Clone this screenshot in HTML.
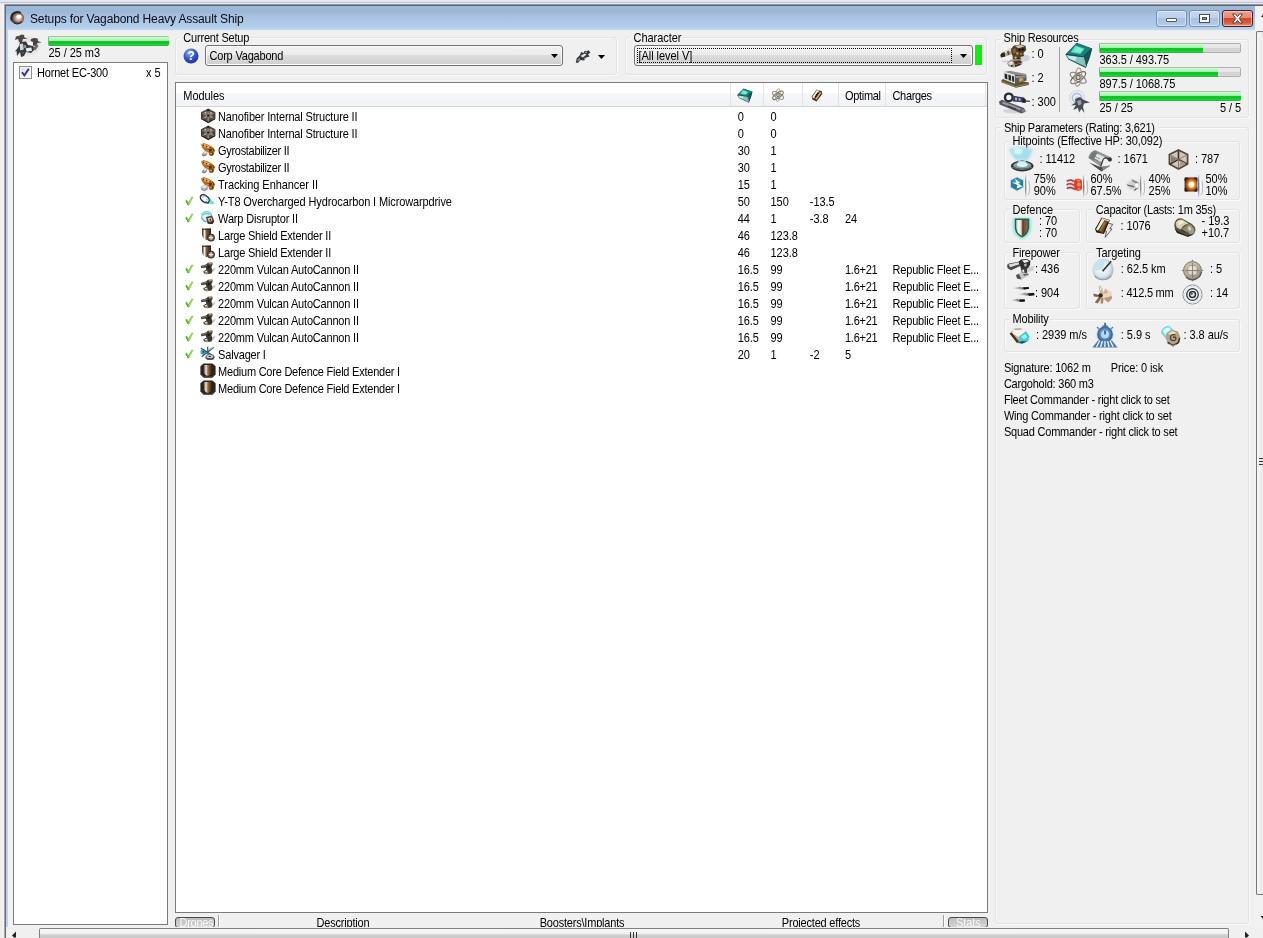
<!DOCTYPE html>
<html><head><meta charset="utf-8"><title>Setups for Vagabond Heavy Assault Ship</title>
<style>
html,body{margin:0;padding:0}
body{width:1263px;height:938px;overflow:hidden;background:#f0f0f0;font-family:"Liberation Sans",sans-serif;font-size:11px;color:#000;position:relative}
.a{position:absolute;box-sizing:content-box}
.t{position:absolute;white-space:nowrap;line-height:13px;font-size:11px;transform:scaleY(1.125);transform-origin:0 10px}
.gb{border:1px solid #e3e3e3;border-radius:3px;box-shadow:inset 1px 1px 0 #f9f9f9,1px 1px 0 #f9f9f9}
.pb{border-radius:2px;background:linear-gradient(#ececec 0%,#e6e6e6 45%,#d2d2d2 55%,#d8d8d8 85%,#e6e6e6 100%);box-shadow:inset 0 0 0 1px #b0b0b0;overflow:hidden}
.pf{height:100%;border-left:1px solid #62c672;background:linear-gradient(#a6c0a6 0,#a6c0a6 10%,#d0fad6 10%,#c2f6ca 25%,#9ceea8 49%,#12c62a 51%,#0cc424 65%,#1cd434 89%,#36b446 90%,#36b446 100%)}
.lb{border:1px solid #7b7b7b;background:#fff}
.cb{border:1px solid #707070;border-radius:3px;background:linear-gradient(#f2f2f2 0%,#ebebeb 49%,#dddddd 50%,#cfcfcf 100%);box-shadow:inset 0 0 0 1px #fcfcfc}
.arr{position:absolute;width:0;height:0;border-left:4px solid transparent;border-right:4px solid transparent;border-top:4px solid #000}
.hs{position:absolute;top:83px;width:1px;height:23px;background:#e2e3ea}
svg{position:absolute;overflow:visible}
</style></head><body>

<svg width="0" height="0" style="left:0;top:0"><defs>
<filter id="b45" x="-20%" y="-20%" width="140%" height="140%"><feGaussianBlur stdDeviation="0.45"/></filter>
<filter id="b30" x="-20%" y="-20%" width="140%" height="140%"><feGaussianBlur stdDeviation="0.3"/></filter>
<filter id="b70" x="-20%" y="-20%" width="140%" height="140%"><feGaussianBlur stdDeviation="0.7"/></filter>
<filter id="b120" x="-30%" y="-30%" width="160%" height="160%"><feGaussianBlur stdDeviation="1.2"/></filter>
<radialGradient id="gNano" cx="50%" cy="45%" r="60%"><stop offset="0" stop-color="#8a8078"/><stop offset="0.6" stop-color="#524840"/><stop offset="1" stop-color="#2c2620"/></radialGradient>
<linearGradient id="gRig" x1="0" x2="1" y1="0" y2="0"><stop offset="0" stop-color="#3a2a1c"/><stop offset="0.3" stop-color="#f4eee4"/><stop offset="0.5" stop-color="#a0703c"/><stop offset="0.8" stop-color="#5a3a1c"/><stop offset="1" stop-color="#2a1c10"/></linearGradient>
<linearGradient id="gLse" x1="0" x2="1" y1="0" y2="0"><stop offset="0" stop-color="#30241a"/><stop offset="0.28" stop-color="#f0ece4"/><stop offset="0.5" stop-color="#7a5a3a"/><stop offset="1" stop-color="#2a2018"/></linearGradient>
<linearGradient id="gCpu" x1="0" x2="1" y1="0" y2="1"><stop offset="0" stop-color="#5fe0cc"/><stop offset="0.5" stop-color="#2aa39a"/><stop offset="1" stop-color="#125e60"/></linearGradient>
<radialGradient id="gShGlow" cx="50%" cy="35%" r="60%"><stop offset="0" stop-color="#d8f8ff"/><stop offset="0.5" stop-color="#9edcf0"/><stop offset="1" stop-color="#9edcf0" stop-opacity="0"/></radialGradient>
<radialGradient id="gDisc" cx="50%" cy="50%" r="50%"><stop offset="0" stop-color="#e8ffff"/><stop offset="0.35" stop-color="#9ad0e0"/><stop offset="0.6" stop-color="#4a4c50"/><stop offset="1" stop-color="#2a2a2c"/></radialGradient>
<linearGradient id="gArm" x1="0" x2="1" y1="0" y2="1"><stop offset="0" stop-color="#c8c8c8"/><stop offset="0.5" stop-color="#8c8c8c"/><stop offset="1" stop-color="#4a4a4a"/></linearGradient>
<radialGradient id="gExp" cx="55%" cy="50%" r="55%"><stop offset="0" stop-color="#ffffee"/><stop offset="0.3" stop-color="#ffd060"/><stop offset="0.6" stop-color="#e07018"/><stop offset="1" stop-color="#4a2010"/></radialGradient>
<linearGradient id="gDef" x1="0" x2="1" y1="0" y2="0"><stop offset="0" stop-color="#b8ccc4"/><stop offset="0.2" stop-color="#f6f6f2"/><stop offset="0.42" stop-color="#ead8d0"/><stop offset="0.56" stop-color="#6a3418"/><stop offset="0.76" stop-color="#7a5c44"/><stop offset="1" stop-color="#5a7266"/></linearGradient>
<linearGradient id="gCap" x1="0" x2="1" y1="0" y2="1"><stop offset="0" stop-color="#f0e8d8"/><stop offset="0.5" stop-color="#a88858"/><stop offset="1" stop-color="#4a3420"/></linearGradient>
<linearGradient id="gBat" x1="0" x2="1" y1="0" y2="1"><stop offset="0" stop-color="#8a846a"/><stop offset="0.5" stop-color="#4a4630"/><stop offset="1" stop-color="#2a281c"/></linearGradient>
<linearGradient id="gSil" x1="0" x2="0" y1="0" y2="1"><stop offset="0" stop-color="#e0e0e0"/><stop offset="0.5" stop-color="#909090"/><stop offset="1" stop-color="#3a3a3a"/></linearGradient>
<radialGradient id="gRng" cx="45%" cy="45%" r="55%"><stop offset="0" stop-color="#ffffff"/><stop offset="0.7" stop-color="#d8e6ee"/><stop offset="1" stop-color="#a8b8c4"/></radialGradient>
<radialGradient id="gCmp" cx="45%" cy="40%" r="60%"><stop offset="0" stop-color="#ece6da"/><stop offset="0.6" stop-color="#bdb5a5"/><stop offset="1" stop-color="#8c8474"/></radialGradient>
<radialGradient id="gStop" cx="50%" cy="45%" r="55%"><stop offset="0" stop-color="#bcdcf8"/><stop offset="0.6" stop-color="#5a90c4"/><stop offset="1" stop-color="#35618f"/></radialGradient>
<linearGradient id="gTur" x1="0" x2="1" y1="0" y2="1"><stop offset="0" stop-color="#a88860"/><stop offset="0.5" stop-color="#6a5038"/><stop offset="1" stop-color="#3a2c20"/></linearGradient>
</defs></svg>
<div class="a" style="left:0px;top:0px;width:1263px;height:2px;background:#e4e6f6"></div>
<div class="a" style="left:0px;top:2px;width:1263px;height:1px;background:#c0c4c8"></div>
<div class="a" style="left:0px;top:3px;width:1263px;height:1px;background:#e8ecee"></div>
<div class="a" style="left:0px;top:4px;width:5px;height:934px;background:linear-gradient(90deg,#f4ecec 0,#f4ecec 40%,#f1f2f2 41%)"></div>
<div class="a" style="left:4px;top:4px;width:1259px;height:1px;background:#8e989a"></div>
<div class="a" style="left:4px;top:4px;width:1px;height:934px;background:#a4a8ac"></div>
<div class="a" style="left:5px;top:5px;width:1258px;height:1px;background:#5a6874"></div>
<div class="a" style="left:5px;top:5px;width:1px;height:933px;background:#5e6e78"></div>
<div class="a" style="left:6px;top:6px;width:1249px;height:24px;background:linear-gradient(#a2b6da 0%,#98b8d6 20%,#9cbcd4 32%,#a8bee0 36%,#b0d0ec 90%,#c0d2e4 93%,#c4d6e8 100%)"></div>
<div class="a" style="left:6px;top:30px;width:1249px;height:1px;background:#e4eef8"></div>
<div class="a" style="left:6px;top:30px;width:2px;height:897px;background:#c4cff0"></div>
<div class="a" style="left:8px;top:31px;width:2px;height:896px;background:#ecf3ea"></div>
<div class="a" style="left:10px;top:31px;width:3px;height:896px;background:#f2f1f9"></div>
<div class="a" style="left:1255px;top:6px;width:8px;height:932px;background:#f2f2f2"></div>
<div class="a" style="left:1256px;top:31px;width:7px;height:862px;background:linear-gradient(90deg,#f6f6f6,#e6e6e6);border-left:1px solid #777;border-top:1px solid #777;border-bottom:1px solid #777;border-radius:2px 0 0 2px"></div>
<div class="a" style="left:1259px;top:458px;width:4px;height:1px;background:#333"></div>
<div class="a" style="left:1259px;top:461px;width:4px;height:1px;background:#333"></div>
<div class="a" style="left:1259px;top:464px;width:4px;height:1px;background:#333"></div>
<svg style="left:1257px;top:12px" width="6" height="8"><path d="M4 5 L6 2.4 L6 5 Z" fill="#222"/></svg>
<svg style="left:1257px;top:914px" width="6" height="8"><path d="M3.6 2 L6 2 L6 5 Z" fill="#222"/></svg>
<svg style="left:10px;top:11px" width="15" height="14" viewBox="0 0 15 14"><defs><radialGradient id="ti" cx="58%" cy="48%" r="55%"><stop offset="0" stop-color="#f4e8e4"/><stop offset="0.4" stop-color="#cfa89c"/><stop offset="0.75" stop-color="#7a5448"/><stop offset="1" stop-color="#3a2c2c"/></radialGradient></defs><g filter="url(#b45)"><ellipse cx="7.4" cy="7.2" rx="6.6" ry="6.2" fill="url(#ti)"/><path d="M1.6 9.6 Q0 4 4.6 1.6 Q8 0.2 10.6 2" stroke="#26262c" stroke-width="2" fill="none"/><ellipse cx="9" cy="5.6" rx="2.6" ry="2" fill="#fff" opacity=".95"/><path d="M4 11.6 Q8 13.8 12 11" stroke="#3c2c28" stroke-width="1.2" fill="none"/></g></svg>
<div class="t" style="left:30px;top:12px;transform:none;will-change:transform;color:#0a0a14;font-size:12px;line-height:15px;letter-spacing:-0.132px">Setups for Vagabond Heavy Assault Ship</div>
<div class="a" style="left:1156px;top:10px;width:29px;height:15px;border:1px solid #7590b8;border-radius:3px;background:linear-gradient(#c6d8f0 0%,#bcd0ec 48%,#a8c0e2 50%,#b4cceb 100%);box-shadow:inset 0 0 0 1px rgba(255,255,255,.45)"></div>
<div class="a" style="left:1189px;top:10px;width:29px;height:15px;border:1px solid #7590b8;border-radius:3px;background:linear-gradient(#c6d8f0 0%,#bcd0ec 48%,#a8c0e2 50%,#b4cceb 100%);box-shadow:inset 0 0 0 1px rgba(255,255,255,.45)"></div>
<div class="a" style="left:1222px;top:10px;width:29px;height:15px;border:1px solid #3a2030;border-radius:3px;background:linear-gradient(#f0a090 0%,#e88872 48%,#d0482a 50%,#d86040 80%,#e89880 100%);box-shadow:inset 0 0 0 1px rgba(255,220,210,.55)"></div>
<div class="a" style="left:1166px;top:18px;width:9px;height:2px;border:1px solid #505868;background:#fff;border-radius:1px"></div>
<div class="a" style="left:1200px;top:15px;width:5px;height:3px;border:2px solid #fff;outline:1px solid #46506a;background:#8494b4;box-shadow:inset 0 0 0 1px #46506a"></div>
<svg style="left:1231px;top:13px" width="13" height="11" viewBox="0 0 13 11"><path d="M1.5 1 L4.5 1 L6.5 3.6 L8.5 1 L11.5 1 L8.2 5.5 L11.5 10 L8.5 10 L6.5 7.4 L4.5 10 L1.5 10 L4.8 5.5 Z" fill="#fff" stroke="#5a3838" stroke-width="1" stroke-linejoin="round"/></svg>
<svg style="left:14px;top:34px" width="28" height="24" viewBox="0 0 28 24"><g><g filter="url(#b120)"><ellipse cx="15" cy="12" rx="11" ry="9.4" fill="#e6dcdc" opacity=".75"/></g><g filter="url(#b70)"><path d="M2 2.4 L6 1.6 L7 0.6 L10.4 1 L10 3 L13.4 4.8 L9 5 L8 8 L5 8 L4 5 L1 6 Z" fill="#48484a"/><path d="M17 5 L20 4 L23.6 4.6 L24 7 L27.6 8.8 L23.6 8.8 L22 12 L19 11.6 L19 8 L16.6 7Z" fill="#444446"/><path d="M6 8 L12 7.6 L14 11 L19 12 L21 15 L17 19 L12 18 L10 22 L7 23 L6 18 L3 22 L2.6 17 L0.8 17.6 L3 15 L5 12Z" fill="#34383a"/><path d="M5.6 10 L9 9.6 L9.8 15.4 L6.2 16.4Z" fill="#cfd8d8"/><path d="M11.6 14.2 L17.4 13.6 L18 16.8 L12.6 17.8Z" fill="#e6eeee"/><path d="M12.6 7.6 L18.4 8.6 L18.4 11.4 L14.4 10.8Z" fill="#f6f6f6"/><path d="M19 14.6 L23 10 L24.4 12 L21.4 16.6Z" fill="#6e686a"/><path d="M9.6 11 L12 11 L12.4 14 L10 14Z" fill="#8a9496"/><path d="M7 18 L10 17.4 L9 21Z" fill="#5c5456"/></g></g></svg>
<div class="a pb" style="left:48px;top:36px;width:121px;height:10px;"><div class="pf" style="width:120px"></div></div>
<div class="t " style="left:48.5px;top:47px;letter-spacing:-0.050px;">25 / 25 m3</div>
<div class="a lb" style="left:13px;top:62px;width:153px;height:861px;"></div>
<div class="a" style="left:19px;top:66px;width:11px;height:11px;border:1px solid #8e8f8f;background:linear-gradient(135deg,#dcdcdc,#fff);box-shadow:inset 0 0 0 1px #f4f4f4"></div>
<svg style="left:21px;top:68px" width="9" height="9" viewBox="0 0 9 9"><path d="M1 4.2 L3.4 7.4 L7.8 0.8" stroke="#31348f" stroke-width="1.9" fill="none"/></svg>
<div class="t " style="left:37px;top:67px;letter-spacing:-0.185px;">Hornet EC-300</div>
<div class="t " style="right:1102.45px;top:67px;letter-spacing:-0.050px;transform-origin:100% 10px;">x 5</div>
<div class="a gb" style="left:175px;top:37px;width:440px;height:36px;"></div>
<div class="a" style="left:180px;top:33px;width:66px;height:10px;background:#f0f0f0"></div>
<div class="t " style="left:183.3px;top:32px;letter-spacing:-0.200px;">Current Setup</div>
<svg style="left:183px;top:48px" width="16" height="16" viewBox="0 0 16 16"><defs><radialGradient id="hg" cx="40%" cy="30%" r="75%"><stop offset="0" stop-color="#9fb4f4"/><stop offset="0.5" stop-color="#3a5bd0"/><stop offset="1" stop-color="#1a2f98"/></radialGradient></defs><circle cx="8" cy="8" r="7.5" fill="url(#hg)"/><text x="8" y="12.2" font-family="Liberation Sans" font-weight="bold" font-size="12" text-anchor="middle" fill="#fff">?</text></svg>
<div class="a cb" style="left:205px;top:45px;width:356px;height:19px;"></div>
<div class="t " style="left:209.5px;top:50px;letter-spacing:-0.200px;">Corp Vagabond</div>
<svg style="left:551px;top:54px" width="7" height="4"><path d="M0 0 L7 0 L3.5 4 Z" fill="#000"/></svg>
<svg style="left:575px;top:49px" width="16" height="15" viewBox="0 0 16 15"><g filter="url(#b50)"><path d="M0.8 13.8 L1.6 9.6 L5 6 L6 3 L8.4 4 L10 1.4 L12 2.6 L13.2 1 L15.4 3.6 L13 5.6 L14.6 7.6 L11 8.4 L9 11.4 L5.6 11 L3 13.8Z" fill="#30363a"/><path d="M5.4 7 L9.4 4.6 L11.6 5.6 L8 8.4Z" fill="#dfe4e4"/><path d="M2 11 L4.6 9 L5.4 10.4 L3 12.6Z" fill="#8c9494"/><path d="M10 2.6 L12 3.2 L11 4.4Z" fill="#c8d0d0"/><path d="M9 9 L11 8.6 L9.6 10.6Z" fill="#a0a8a8"/></g></svg>
<svg style="left:598px;top:55px" width="7" height="4"><path d="M0 0 L7 0 L3.5 4 Z" fill="#000"/></svg>
<div class="a gb" style="left:625px;top:37px;width:360px;height:36px;"></div>
<div class="a" style="left:630px;top:33px;width:50px;height:10px;background:#f0f0f0"></div>
<div class="t " style="left:633.6px;top:32px;letter-spacing:-0.050px;">Character</div>
<div class="a cb" style="left:634px;top:45px;width:337px;height:19px;"></div>
<div class="a" style="left:637px;top:48px;width:313px;height:13px;border:1px dotted #000"></div>
<div class="t " style="left:638.5px;top:50px;letter-spacing:-0.050px;">[All level V]</div>
<svg style="left:960px;top:54px" width="7" height="4"><path d="M0 0 L7 0 L3.5 4 Z" fill="#000"/></svg>
<div class="a" style="left:975px;top:45px;width:7px;height:20px;background:#0cf00c"></div>
<div class="a lb" style="left:175px;top:82px;width:811px;height:829px;"></div>
<div class="a" style="left:176px;top:83px;width:811px;height:23px;background:linear-gradient(#ffffff 0%,#ffffff 43%,#f6f7f9 44%,#f1f2f5 100%);border-bottom:1px solid #d5d5d5"></div>
<div class="hs" style="left:730px"></div>
<div class="hs" style="left:763px"></div>
<div class="hs" style="left:802px"></div>
<div class="hs" style="left:838px"></div>
<div class="hs" style="left:885px"></div>
<div class="hs" style="left:985px"></div>
<svg style="left:737px;top:88px" width="16" height="15" viewBox="0 0 16 15"><g filter="url(#b40)"><g transform="scale(0.57)"><path d="M11.6 0.8 L27.2 6.4 L25 15 L20.8 26 L3.4 17.4 L0.4 12.4 Z" fill="#174a4e"/><path d="M11.6 1.2 L26.8 6.8 L18 14.6 L0.8 12.2 Z" fill="#1d8078"/><path d="M10.4 3.6 L19.6 6.8 L15.4 12 L5.6 10.2 Z" fill="#56e2c2"/><path d="M12 5 L17.6 7 L15 10.4 L9 9.4 Z" fill="#7af0d4"/><path d="M0.8 12.8 L18 15 L20.2 24.6 L3.8 16.8 Z" fill="#84c6c2"/><path d="M2.4 13.6 L12 15 L10 19 L4 16.4 Z" fill="#c4eeea"/><path d="M18.2 15 L26.8 7.4 L24.8 14.6 L20.8 25.4 Z" fill="#1e5258"/><path d="M18.4 15.2 L20.6 24.6" stroke="#b4ccd0" stroke-width="1"/><path d="M1 12.4 L18 14.8 L26.6 7" stroke="#0e4a46" stroke-width="0.9" fill="none"/></g></g></svg>
<svg style="left:771px;top:88px" width="14" height="14" viewBox="0 0 14 14"><g filter="url(#b40)"><g transform="scale(1.0)" fill="none" stroke-width="0.95"><ellipse cx="7" cy="7.4" rx="6.2" ry="2.5" stroke="#8c867a" transform="rotate(30 7 7.4)"/><ellipse cx="7" cy="7.4" rx="6.2" ry="2.5" stroke="#6e685c" transform="rotate(-36 7 7.4)"/><ellipse cx="7" cy="7" rx="2.3" ry="6.4" stroke="#a09a8e" transform="rotate(6 7 7)"/><circle cx="7" cy="7.2" r="1.4" fill="#e4e0d8" stroke="#6a6054"/></g></g></svg>
<svg style="left:811px;top:89px" width="12" height="13" viewBox="0 0 12 13"><g filter="url(#b40)"><g transform="scale(1.0)"><path d="M5.6 0.6 L10.8 2.2 L11.2 5 L5.6 12.4 L1.4 10.6 L0.8 7.6 Z" fill="#4a2c14"/><path d="M5.8 1 L8.4 1.8 L3 9.6 L1.2 8 Z" fill="#f4ece0"/><path d="M8.6 3 L10.6 3.6 L5.8 10.8 L4 10 Z" fill="#c8a878"/><path d="M6.4 3.4 L8 4 L4.6 8.8 L3.6 8 Z" fill="#1c1008"/></g></g></svg>
<div class="t " style="left:183.3px;top:90px;letter-spacing:-0.050px;">Modules</div>
<div class="t " style="left:845px;top:90px;letter-spacing:-0.315px;">Optimal</div>
<div class="t " style="left:892.5px;top:90px;letter-spacing:-0.342px;">Charges</div>
<svg style="left:200px;top:108px" width="16" height="16" viewBox="0 0 16 16"><g filter="url(#b50)"><path d="M8.2 0.6 L15.4 4.2 L15.4 11 L8.2 15 L1 11 L1 4.2 Z" fill="url(#gNano)"/><path d="M8.2 7.8 L8.2 1.6 M8.2 7.8 L14.6 4.8 M8.2 7.8 L14.6 10.8 M8.2 7.8 L8.2 14.2 M8.2 7.8 L1.8 10.8 M8.2 7.8 L1.8 4.8" stroke="#b4aa9a" stroke-width="0.7" opacity=".8"/><circle cx="5.4" cy="4.6" r="0.9" fill="#d8d0c0"/><circle cx="11" cy="4.8" r="0.9" fill="#d0c8b8"/><circle cx="11.6" cy="9" r="0.8" fill="#b8b0a0"/><circle cx="5" cy="9.4" r="0.8" fill="#b0a898"/><circle cx="8.2" cy="12" r="0.8" fill="#a8a090"/><circle cx="8.2" cy="7.6" r="1.2" fill="#181410"/><circle cx="8.2" cy="2.2" r="1.1" fill="#201a16"/><path d="M1.4 10.8 L8.2 14.6 L15 10.8" stroke="#241e1a" stroke-width="1" fill="none"/></g></svg>
<div class="t " style="left:218.1px;top:111px;letter-spacing:-0.165px;">Nanofiber Internal Structure II</div>
<div class="t " style="left:737.7px;top:111px;letter-spacing:-0.050px;">0</div>
<div class="t " style="left:770.5px;top:111px;letter-spacing:-0.050px;">0</div>
<svg style="left:200px;top:125px" width="16" height="16" viewBox="0 0 16 16"><g filter="url(#b50)"><path d="M8.2 0.6 L15.4 4.2 L15.4 11 L8.2 15 L1 11 L1 4.2 Z" fill="url(#gNano)"/><path d="M8.2 7.8 L8.2 1.6 M8.2 7.8 L14.6 4.8 M8.2 7.8 L14.6 10.8 M8.2 7.8 L8.2 14.2 M8.2 7.8 L1.8 10.8 M8.2 7.8 L1.8 4.8" stroke="#b4aa9a" stroke-width="0.7" opacity=".8"/><circle cx="5.4" cy="4.6" r="0.9" fill="#d8d0c0"/><circle cx="11" cy="4.8" r="0.9" fill="#d0c8b8"/><circle cx="11.6" cy="9" r="0.8" fill="#b8b0a0"/><circle cx="5" cy="9.4" r="0.8" fill="#b0a898"/><circle cx="8.2" cy="12" r="0.8" fill="#a8a090"/><circle cx="8.2" cy="7.6" r="1.2" fill="#181410"/><circle cx="8.2" cy="2.2" r="1.1" fill="#201a16"/><path d="M1.4 10.8 L8.2 14.6 L15 10.8" stroke="#241e1a" stroke-width="1" fill="none"/></g></svg>
<div class="t " style="left:218.1px;top:128px;letter-spacing:-0.165px;">Nanofiber Internal Structure II</div>
<div class="t " style="left:737.7px;top:128px;letter-spacing:-0.050px;">0</div>
<div class="t " style="left:770.5px;top:128px;letter-spacing:-0.050px;">0</div>
<svg style="left:200px;top:142px" width="16" height="16" viewBox="0 0 16 16"><g filter="url(#b50)"><path d="M1 2.4 L3.6 1 L8 2.6 L12.6 5 L15 8 L14 11.4 L12.6 14 L9.6 13.6 L8.4 10.4 L5 9 L2.4 6 Z" fill="#b8701e"/><path d="M2 2.6 L4 1.8 L8 3.4 L11.6 5.4 L9 6.4 L4.4 5 Z" fill="#eeb464"/><path d="M6.4 7.4 L13.6 6.6 L14.6 9 L9.4 9.8 Z" fill="#5a2c0a"/><path d="M9.4 10.6 L13.4 10 L12.4 13.4 L10 13.4 Z" fill="#80400e"/><circle cx="3.6" cy="3.2" r="0.8" fill="#4a2408"/><circle cx="6.6" cy="4.6" r="0.8" fill="#4a2408"/><circle cx="10" cy="5.8" r="0.8" fill="#5a2c0a"/><circle cx="12.6" cy="8" r="0.8" fill="#e8a850"/><circle cx="11" cy="11.6" r="0.8" fill="#f0bc78"/><circle cx="8" cy="8.4" r="0.8" fill="#e8a850"/><circle cx="13" cy="12" r="0.7" fill="#3c1c06"/><path d="M1.6 12.4 L4.4 9.2 L7.6 10.4 L7 13 L3.6 14.2 Z" fill="#a4a8b0"/><path d="M3.6 10.8 L5 9.8 L6.8 10.6 L5 11.8 Z" fill="#f0f2f4"/><path d="M1.8 12.6 L3.6 14 L6 13.2" stroke="#5c5c64" stroke-width="0.8" fill="none"/></g></svg>
<div class="t " style="left:218.1px;top:145px;letter-spacing:-0.314px;">Gyrostabilizer II</div>
<div class="t " style="left:737.7px;top:145px;letter-spacing:-0.050px;">30</div>
<div class="t " style="left:770.5px;top:145px;letter-spacing:-0.050px;">1</div>
<svg style="left:200px;top:159px" width="16" height="16" viewBox="0 0 16 16"><g filter="url(#b50)"><path d="M1 2.4 L3.6 1 L8 2.6 L12.6 5 L15 8 L14 11.4 L12.6 14 L9.6 13.6 L8.4 10.4 L5 9 L2.4 6 Z" fill="#b8701e"/><path d="M2 2.6 L4 1.8 L8 3.4 L11.6 5.4 L9 6.4 L4.4 5 Z" fill="#eeb464"/><path d="M6.4 7.4 L13.6 6.6 L14.6 9 L9.4 9.8 Z" fill="#5a2c0a"/><path d="M9.4 10.6 L13.4 10 L12.4 13.4 L10 13.4 Z" fill="#80400e"/><circle cx="3.6" cy="3.2" r="0.8" fill="#4a2408"/><circle cx="6.6" cy="4.6" r="0.8" fill="#4a2408"/><circle cx="10" cy="5.8" r="0.8" fill="#5a2c0a"/><circle cx="12.6" cy="8" r="0.8" fill="#e8a850"/><circle cx="11" cy="11.6" r="0.8" fill="#f0bc78"/><circle cx="8" cy="8.4" r="0.8" fill="#e8a850"/><circle cx="13" cy="12" r="0.7" fill="#3c1c06"/><path d="M1.6 12.4 L4.4 9.2 L7.6 10.4 L7 13 L3.6 14.2 Z" fill="#a4a8b0"/><path d="M3.6 10.8 L5 9.8 L6.8 10.6 L5 11.8 Z" fill="#f0f2f4"/><path d="M1.8 12.6 L3.6 14 L6 13.2" stroke="#5c5c64" stroke-width="0.8" fill="none"/></g></svg>
<div class="t " style="left:218.1px;top:162px;letter-spacing:-0.314px;">Gyrostabilizer II</div>
<div class="t " style="left:737.7px;top:162px;letter-spacing:-0.050px;">30</div>
<div class="t " style="left:770.5px;top:162px;letter-spacing:-0.050px;">1</div>
<svg style="left:200px;top:176px" width="16" height="16" viewBox="0 0 16 16"><g filter="url(#b50)"><path d="M1 2.4 L3.6 1 L8 2.6 L12.6 5 L15 8 L14 11.4 L12.6 14 L9.6 13.6 L8.4 10.4 L5 9 L2.4 6 Z" fill="#b8701e"/><path d="M2 2.6 L4 1.8 L8 3.4 L11.6 5.4 L9 6.4 L4.4 5 Z" fill="#eeb464"/><path d="M6.4 7.4 L13.6 6.6 L14.6 9 L9.4 9.8 Z" fill="#5a2c0a"/><path d="M9.4 10.6 L13.4 10 L12.4 13.4 L10 13.4 Z" fill="#80400e"/><circle cx="3.6" cy="3.2" r="0.8" fill="#4a2408"/><circle cx="6.6" cy="4.6" r="0.8" fill="#4a2408"/><circle cx="10" cy="5.8" r="0.8" fill="#5a2c0a"/><circle cx="12.6" cy="8" r="0.8" fill="#e8a850"/><circle cx="11" cy="11.6" r="0.8" fill="#f0bc78"/><circle cx="8" cy="8.4" r="0.8" fill="#e8a850"/><circle cx="13" cy="12" r="0.7" fill="#3c1c06"/><path d="M0.6 11 L4.6 8.6 L8 10 L8 13 L4.6 15.2 L1 13.6 Z" fill="#b0b4bc"/><path d="M1.2 11.2 L4.6 9.2 L7.4 10.4 L4.2 12.2 Z" fill="#e6e8ec"/><path d="M1.4 13.4 L4.6 14.8 L7.6 13" stroke="#787c84" stroke-width="0.8" fill="none"/></g></svg>
<div class="t " style="left:218.1px;top:179px;letter-spacing:-0.063px;">Tracking Enhancer II</div>
<div class="t " style="left:737.7px;top:179px;letter-spacing:-0.050px;">15</div>
<div class="t " style="left:770.5px;top:179px;letter-spacing:-0.050px;">1</div>
<svg style="left:185px;top:196px" width="9" height="10" viewBox="0 0 9 10"><g filter="url(#b50)"><path d="M0.3 4.8 L1.7 3.8 L3.3 6.2 L6.9 0.4 L8.2 0.9 L4.1 9.3 L2.7 9.3 Z" fill="#6ec030"/><path d="M3.4 7.6 L7.2 1.2 L7.8 1.4 L4 8.6Z" fill="#a6e45c"/><path d="M0.6 5 L2.8 9 L3.6 9 L1.6 4.4Z" fill="#58a828"/></g></svg>
<svg style="left:200px;top:193px" width="16" height="16" viewBox="0 0 16 16"><g><g filter="url(#b70)"><path d="M5 5 L9 3.6 L14.6 10.4 L12 11.6 L7 10 Z" fill="#58d8e0" opacity=".85"/></g><g filter="url(#b45)"><ellipse cx="4.8" cy="5.8" rx="5" ry="3.2" transform="rotate(38 4.8 5.8)" fill="#f4f8f8" stroke="#34363a" stroke-width="1.5"/><path d="M2.4 4 Q4 2.4 6 3" stroke="#8c9094" stroke-width="0.9" fill="none"/><path d="M5.4 8.6 L8.6 10.4" stroke="#1c5c64" stroke-width="1.2"/><path d="M6 5.6 L8.4 7.6" stroke="#9ae8ee" stroke-width="1.4"/></g></g></svg>
<div class="t " style="left:218.1px;top:196px;letter-spacing:-0.123px;">Y-T8 Overcharged Hydrocarbon I Microwarpdrive</div>
<div class="t " style="left:737.7px;top:196px;letter-spacing:-0.050px;">50</div>
<div class="t " style="left:770.5px;top:196px;letter-spacing:-0.050px;">150</div>
<div class="t " style="left:809.8px;top:196px;letter-spacing:-0.050px;">-13.5</div>
<svg style="left:185px;top:213px" width="9" height="10" viewBox="0 0 9 10"><g filter="url(#b50)"><path d="M0.3 4.8 L1.7 3.8 L3.3 6.2 L6.9 0.4 L8.2 0.9 L4.1 9.3 L2.7 9.3 Z" fill="#6ec030"/><path d="M3.4 7.6 L7.2 1.2 L7.8 1.4 L4 8.6Z" fill="#a6e45c"/><path d="M0.6 5 L2.8 9 L3.6 9 L1.6 4.4Z" fill="#58a828"/></g></svg>
<svg style="left:200px;top:210px" width="16" height="16" viewBox="0 0 16 16"><g><g filter="url(#b70)"><circle cx="6.6" cy="6.4" r="5" fill="#d4f2f4" stroke="#84d8e0" stroke-width="1.5"/></g><g filter="url(#b45)"><path d="M3 5 Q6 2 9.6 4.4" stroke="#5cc8d4" stroke-width="1.2" fill="none"/><path d="M2 8 Q3 11.4 6 12" stroke="#6a9ca4" stroke-width="1" fill="none"/><path d="M6 7 L12 5.6 L14.2 10.4 L12.6 14 L7.4 13.6 Z" fill="#5c4430"/><path d="M7.6 8.2 L11.4 7.4 L12.4 10.6 L9 11.8 Z" fill="#e4d8cc"/><path d="M9.4 9 L11 8.8 L11.4 10.4 L9.8 10.8Z" fill="#3c2414"/><path d="M8 13 L12.6 13.4 L13.6 11" stroke="#241810" stroke-width="1" fill="none"/></g></g></svg>
<div class="t " style="left:218.1px;top:213px;letter-spacing:-0.179px;">Warp Disruptor II</div>
<div class="t " style="left:737.7px;top:213px;letter-spacing:-0.050px;">44</div>
<div class="t " style="left:770.5px;top:213px;letter-spacing:-0.050px;">1</div>
<div class="t " style="left:809.8px;top:213px;letter-spacing:-0.050px;">-3.8</div>
<div class="t " style="left:845px;top:213px;letter-spacing:-0.050px;">24</div>
<svg style="left:200px;top:227px" width="16" height="16" viewBox="0 0 16 16"><g filter="url(#b45)"><path d="M2 1.6 L11 1.6 L11 8 Q10.4 11.8 6.6 13.2 Q2.6 11.8 2 8 Z" fill="url(#gLse)"/><path d="M2 1.6 L11 1.6 L11 3 L2 3Z" fill="#2c2016" opacity=".7"/><circle cx="11" cy="10.6" r="3.9" fill="#342c26"/><circle cx="11" cy="10.6" r="2.9" fill="#7a7062"/><path d="M11 8.6 L11 12.6 M9 10.6 L13 10.6" stroke="#f0e8d8" stroke-width="1.2"/></g></svg>
<div class="t " style="left:218.1px;top:230px;letter-spacing:-0.214px;">Large Shield Extender II</div>
<div class="t " style="left:737.7px;top:230px;letter-spacing:-0.050px;">46</div>
<div class="t " style="left:770.5px;top:230px;letter-spacing:-0.050px;">123.8</div>
<svg style="left:200px;top:244px" width="16" height="16" viewBox="0 0 16 16"><g filter="url(#b45)"><path d="M2 1.6 L11 1.6 L11 8 Q10.4 11.8 6.6 13.2 Q2.6 11.8 2 8 Z" fill="url(#gLse)"/><path d="M2 1.6 L11 1.6 L11 3 L2 3Z" fill="#2c2016" opacity=".7"/><circle cx="11" cy="10.6" r="3.9" fill="#342c26"/><circle cx="11" cy="10.6" r="2.9" fill="#7a7062"/><path d="M11 8.6 L11 12.6 M9 10.6 L13 10.6" stroke="#f0e8d8" stroke-width="1.2"/></g></svg>
<div class="t " style="left:218.1px;top:247px;letter-spacing:-0.214px;">Large Shield Extender II</div>
<div class="t " style="left:737.7px;top:247px;letter-spacing:-0.050px;">46</div>
<div class="t " style="left:770.5px;top:247px;letter-spacing:-0.050px;">123.8</div>
<svg style="left:185px;top:264px" width="9" height="10" viewBox="0 0 9 10"><g filter="url(#b50)"><path d="M0.3 4.8 L1.7 3.8 L3.3 6.2 L6.9 0.4 L8.2 0.9 L4.1 9.3 L2.7 9.3 Z" fill="#6ec030"/><path d="M3.4 7.6 L7.2 1.2 L7.8 1.4 L4 8.6Z" fill="#a6e45c"/><path d="M0.6 5 L2.8 9 L3.6 9 L1.6 4.4Z" fill="#58a828"/></g></svg>
<svg style="left:200px;top:261px" width="16" height="16" viewBox="0 0 16 16"><g><g filter="url(#b70)"><path d="M11 9 L15.6 6.6 L15 9 L12 11.6Z" fill="#b8b8b8" opacity=".8"/></g><g filter="url(#b45)"><path d="M0.8 5 L6 3.4 L8 1.8 L12.4 1.4 L12.6 3.6 L11.4 6 L12.4 9.4 L11.6 12.4 L6.4 13.2 L4 12.2 L3.2 10.4 L6.4 8.6 L5.6 6.6 L1.4 7.2 Z" fill="#3e362e"/><path d="M1.4 5 L6.2 3.8 L7.6 4.6 L2 6.2Z" fill="#7c7468"/><path d="M8.6 2.2 L11.8 1.8 L11.6 3.2 L9 3.6Z" fill="#a89c8c"/><path d="M4.4 10.6 L7 9.6 L7.6 10.8 L5 11.8Z" fill="#e4e0d8"/><path d="M5 12 L8 11.2 L8.4 12.4 L6 12.8Z" fill="#c8c4b8"/><circle cx="8.6" cy="6" r="1" fill="#16120e"/></g></g></svg>
<div class="t " style="left:218.1px;top:264px;letter-spacing:-0.195px;">220mm Vulcan AutoCannon II</div>
<div class="t " style="left:737.7px;top:264px;letter-spacing:-0.050px;">16.5</div>
<div class="t " style="left:770.5px;top:264px;letter-spacing:-0.050px;">99</div>
<div class="t " style="left:845px;top:264px;letter-spacing:-0.247px;">1.6+21</div>
<div class="t " style="left:892.5px;top:264px;letter-spacing:-0.181px;">Republic Fleet E...</div>
<svg style="left:185px;top:281px" width="9" height="10" viewBox="0 0 9 10"><g filter="url(#b50)"><path d="M0.3 4.8 L1.7 3.8 L3.3 6.2 L6.9 0.4 L8.2 0.9 L4.1 9.3 L2.7 9.3 Z" fill="#6ec030"/><path d="M3.4 7.6 L7.2 1.2 L7.8 1.4 L4 8.6Z" fill="#a6e45c"/><path d="M0.6 5 L2.8 9 L3.6 9 L1.6 4.4Z" fill="#58a828"/></g></svg>
<svg style="left:200px;top:278px" width="16" height="16" viewBox="0 0 16 16"><g><g filter="url(#b70)"><path d="M11 9 L15.6 6.6 L15 9 L12 11.6Z" fill="#b8b8b8" opacity=".8"/></g><g filter="url(#b45)"><path d="M0.8 5 L6 3.4 L8 1.8 L12.4 1.4 L12.6 3.6 L11.4 6 L12.4 9.4 L11.6 12.4 L6.4 13.2 L4 12.2 L3.2 10.4 L6.4 8.6 L5.6 6.6 L1.4 7.2 Z" fill="#3e362e"/><path d="M1.4 5 L6.2 3.8 L7.6 4.6 L2 6.2Z" fill="#7c7468"/><path d="M8.6 2.2 L11.8 1.8 L11.6 3.2 L9 3.6Z" fill="#a89c8c"/><path d="M4.4 10.6 L7 9.6 L7.6 10.8 L5 11.8Z" fill="#e4e0d8"/><path d="M5 12 L8 11.2 L8.4 12.4 L6 12.8Z" fill="#c8c4b8"/><circle cx="8.6" cy="6" r="1" fill="#16120e"/></g></g></svg>
<div class="t " style="left:218.1px;top:281px;letter-spacing:-0.195px;">220mm Vulcan AutoCannon II</div>
<div class="t " style="left:737.7px;top:281px;letter-spacing:-0.050px;">16.5</div>
<div class="t " style="left:770.5px;top:281px;letter-spacing:-0.050px;">99</div>
<div class="t " style="left:845px;top:281px;letter-spacing:-0.247px;">1.6+21</div>
<div class="t " style="left:892.5px;top:281px;letter-spacing:-0.181px;">Republic Fleet E...</div>
<svg style="left:185px;top:298px" width="9" height="10" viewBox="0 0 9 10"><g filter="url(#b50)"><path d="M0.3 4.8 L1.7 3.8 L3.3 6.2 L6.9 0.4 L8.2 0.9 L4.1 9.3 L2.7 9.3 Z" fill="#6ec030"/><path d="M3.4 7.6 L7.2 1.2 L7.8 1.4 L4 8.6Z" fill="#a6e45c"/><path d="M0.6 5 L2.8 9 L3.6 9 L1.6 4.4Z" fill="#58a828"/></g></svg>
<svg style="left:200px;top:295px" width="16" height="16" viewBox="0 0 16 16"><g><g filter="url(#b70)"><path d="M11 9 L15.6 6.6 L15 9 L12 11.6Z" fill="#b8b8b8" opacity=".8"/></g><g filter="url(#b45)"><path d="M0.8 5 L6 3.4 L8 1.8 L12.4 1.4 L12.6 3.6 L11.4 6 L12.4 9.4 L11.6 12.4 L6.4 13.2 L4 12.2 L3.2 10.4 L6.4 8.6 L5.6 6.6 L1.4 7.2 Z" fill="#3e362e"/><path d="M1.4 5 L6.2 3.8 L7.6 4.6 L2 6.2Z" fill="#7c7468"/><path d="M8.6 2.2 L11.8 1.8 L11.6 3.2 L9 3.6Z" fill="#a89c8c"/><path d="M4.4 10.6 L7 9.6 L7.6 10.8 L5 11.8Z" fill="#e4e0d8"/><path d="M5 12 L8 11.2 L8.4 12.4 L6 12.8Z" fill="#c8c4b8"/><circle cx="8.6" cy="6" r="1" fill="#16120e"/></g></g></svg>
<div class="t " style="left:218.1px;top:298px;letter-spacing:-0.195px;">220mm Vulcan AutoCannon II</div>
<div class="t " style="left:737.7px;top:298px;letter-spacing:-0.050px;">16.5</div>
<div class="t " style="left:770.5px;top:298px;letter-spacing:-0.050px;">99</div>
<div class="t " style="left:845px;top:298px;letter-spacing:-0.247px;">1.6+21</div>
<div class="t " style="left:892.5px;top:298px;letter-spacing:-0.181px;">Republic Fleet E...</div>
<svg style="left:185px;top:315px" width="9" height="10" viewBox="0 0 9 10"><g filter="url(#b50)"><path d="M0.3 4.8 L1.7 3.8 L3.3 6.2 L6.9 0.4 L8.2 0.9 L4.1 9.3 L2.7 9.3 Z" fill="#6ec030"/><path d="M3.4 7.6 L7.2 1.2 L7.8 1.4 L4 8.6Z" fill="#a6e45c"/><path d="M0.6 5 L2.8 9 L3.6 9 L1.6 4.4Z" fill="#58a828"/></g></svg>
<svg style="left:200px;top:312px" width="16" height="16" viewBox="0 0 16 16"><g><g filter="url(#b70)"><path d="M11 9 L15.6 6.6 L15 9 L12 11.6Z" fill="#b8b8b8" opacity=".8"/></g><g filter="url(#b45)"><path d="M0.8 5 L6 3.4 L8 1.8 L12.4 1.4 L12.6 3.6 L11.4 6 L12.4 9.4 L11.6 12.4 L6.4 13.2 L4 12.2 L3.2 10.4 L6.4 8.6 L5.6 6.6 L1.4 7.2 Z" fill="#3e362e"/><path d="M1.4 5 L6.2 3.8 L7.6 4.6 L2 6.2Z" fill="#7c7468"/><path d="M8.6 2.2 L11.8 1.8 L11.6 3.2 L9 3.6Z" fill="#a89c8c"/><path d="M4.4 10.6 L7 9.6 L7.6 10.8 L5 11.8Z" fill="#e4e0d8"/><path d="M5 12 L8 11.2 L8.4 12.4 L6 12.8Z" fill="#c8c4b8"/><circle cx="8.6" cy="6" r="1" fill="#16120e"/></g></g></svg>
<div class="t " style="left:218.1px;top:315px;letter-spacing:-0.195px;">220mm Vulcan AutoCannon II</div>
<div class="t " style="left:737.7px;top:315px;letter-spacing:-0.050px;">16.5</div>
<div class="t " style="left:770.5px;top:315px;letter-spacing:-0.050px;">99</div>
<div class="t " style="left:845px;top:315px;letter-spacing:-0.247px;">1.6+21</div>
<div class="t " style="left:892.5px;top:315px;letter-spacing:-0.181px;">Republic Fleet E...</div>
<svg style="left:185px;top:332px" width="9" height="10" viewBox="0 0 9 10"><g filter="url(#b50)"><path d="M0.3 4.8 L1.7 3.8 L3.3 6.2 L6.9 0.4 L8.2 0.9 L4.1 9.3 L2.7 9.3 Z" fill="#6ec030"/><path d="M3.4 7.6 L7.2 1.2 L7.8 1.4 L4 8.6Z" fill="#a6e45c"/><path d="M0.6 5 L2.8 9 L3.6 9 L1.6 4.4Z" fill="#58a828"/></g></svg>
<svg style="left:200px;top:329px" width="16" height="16" viewBox="0 0 16 16"><g><g filter="url(#b70)"><path d="M11 9 L15.6 6.6 L15 9 L12 11.6Z" fill="#b8b8b8" opacity=".8"/></g><g filter="url(#b45)"><path d="M0.8 5 L6 3.4 L8 1.8 L12.4 1.4 L12.6 3.6 L11.4 6 L12.4 9.4 L11.6 12.4 L6.4 13.2 L4 12.2 L3.2 10.4 L6.4 8.6 L5.6 6.6 L1.4 7.2 Z" fill="#3e362e"/><path d="M1.4 5 L6.2 3.8 L7.6 4.6 L2 6.2Z" fill="#7c7468"/><path d="M8.6 2.2 L11.8 1.8 L11.6 3.2 L9 3.6Z" fill="#a89c8c"/><path d="M4.4 10.6 L7 9.6 L7.6 10.8 L5 11.8Z" fill="#e4e0d8"/><path d="M5 12 L8 11.2 L8.4 12.4 L6 12.8Z" fill="#c8c4b8"/><circle cx="8.6" cy="6" r="1" fill="#16120e"/></g></g></svg>
<div class="t " style="left:218.1px;top:332px;letter-spacing:-0.195px;">220mm Vulcan AutoCannon II</div>
<div class="t " style="left:737.7px;top:332px;letter-spacing:-0.050px;">16.5</div>
<div class="t " style="left:770.5px;top:332px;letter-spacing:-0.050px;">99</div>
<div class="t " style="left:845px;top:332px;letter-spacing:-0.247px;">1.6+21</div>
<div class="t " style="left:892.5px;top:332px;letter-spacing:-0.181px;">Republic Fleet E...</div>
<svg style="left:185px;top:349px" width="9" height="10" viewBox="0 0 9 10"><g filter="url(#b50)"><path d="M0.3 4.8 L1.7 3.8 L3.3 6.2 L6.9 0.4 L8.2 0.9 L4.1 9.3 L2.7 9.3 Z" fill="#6ec030"/><path d="M3.4 7.6 L7.2 1.2 L7.8 1.4 L4 8.6Z" fill="#a6e45c"/><path d="M0.6 5 L2.8 9 L3.6 9 L1.6 4.4Z" fill="#58a828"/></g></svg>
<svg style="left:200px;top:346px" width="16" height="16" viewBox="0 0 16 16"><g><g filter="url(#b70)"><circle cx="3.2" cy="6" r="2.8" fill="#34acc4"/></g><g filter="url(#b45)"><circle cx="3.4" cy="6" r="1.1" fill="#0c6c84"/><path d="M0.8 2 L12.6 9.4 M1.6 10.8 L14 1.2 M7.6 0.6 L8 9" stroke="#3c4c5c" stroke-width="1.2" fill="none"/><path d="M9 3.4 L13.6 1.4" stroke="#7cc4d4" stroke-width="1.2"/><ellipse cx="10" cy="11.2" rx="4.6" ry="2.9" fill="#50565e"/><ellipse cx="9.8" cy="10.4" rx="3.4" ry="1.6" fill="#c4ccd4"/><ellipse cx="9.8" cy="10.4" rx="1.4" ry="0.7" fill="#3c4248"/></g></g></svg>
<div class="t " style="left:218.1px;top:349px;letter-spacing:-0.196px;">Salvager I</div>
<div class="t " style="left:737.7px;top:349px;letter-spacing:-0.050px;">20</div>
<div class="t " style="left:770.5px;top:349px;letter-spacing:-0.050px;">1</div>
<div class="t " style="left:809.8px;top:349px;letter-spacing:-0.050px;">-2</div>
<div class="t " style="left:845px;top:349px;letter-spacing:-0.050px;">5</div>
<svg style="left:200px;top:363px" width="16" height="15" viewBox="0 0 16 15"><g filter="url(#b40)"><path d="M3.6 0.4 L12.4 0.4 L15.6 3.2 L15.6 11.6 L12.4 14.8 L3.6 14.8 L0.4 11.6 L0.4 3.2 Z" fill="#2a2420"/><path d="M3.4 2 L12.2 2 L12.2 8 Q11.6 11.8 7.8 13.2 Q4 11.8 3.4 8 Z" fill="url(#gRig)"/><path d="M1.4 12 L4 14.2 L12 14.2 L14.6 12" stroke="#6a5a4a" stroke-width="0.8" fill="none"/></g></svg>
<div class="t " style="left:218.1px;top:366px;letter-spacing:-0.232px;">Medium Core Defence Field Extender I</div>
<svg style="left:200px;top:380px" width="16" height="15" viewBox="0 0 16 15"><g filter="url(#b40)"><path d="M3.6 0.4 L12.4 0.4 L15.6 3.2 L15.6 11.6 L12.4 14.8 L3.6 14.8 L0.4 11.6 L0.4 3.2 Z" fill="#2a2420"/><path d="M3.4 2 L12.2 2 L12.2 8 Q11.6 11.8 7.8 13.2 Q4 11.8 3.4 8 Z" fill="url(#gRig)"/><path d="M1.4 12 L4 14.2 L12 14.2 L14.6 12" stroke="#6a5a4a" stroke-width="0.8" fill="none"/></g></svg>
<div class="t " style="left:218.1px;top:383px;letter-spacing:-0.232px;">Medium Core Defence Field Extender I</div>
<div class="a" style="left:175px;top:917px;width:38px;height:9px;border:1px solid #4a4a4a;border-radius:3px;background:linear-gradient(#bcbcbc,#d6d6d6)"></div>
<div class="t " style="left:179.5px;top:917px;letter-spacing:-0.245px;color:#f8f8f8">Drones</div>
<div class="a" style="left:218px;top:915px;width:1px;height:12px;background:#a0a0a0"></div>
<div class="a" style="left:219px;top:915px;width:1px;height:12px;background:#fff"></div>
<div class="t" style="left:243px;width:200px;text-align:center;top:917px;letter-spacing:-0.2px;transform-origin:50% 10px">Description</div>
<div class="t" style="left:482px;width:200px;text-align:center;top:917px;letter-spacing:-0.2px;transform-origin:50% 10px">Boosters\Implants</div>
<div class="t" style="left:721px;width:200px;text-align:center;top:917px;letter-spacing:-0.2px;transform-origin:50% 10px">Projected effects</div>
<div class="a" style="left:943px;top:915px;width:1px;height:12px;background:#a0a0a0"></div>
<div class="a" style="left:944px;top:915px;width:1px;height:12px;background:#fff"></div>
<div class="a" style="left:948px;top:917px;width:38px;height:9px;border:1px solid #4a4a4a;border-radius:3px;background:linear-gradient(#bcbcbc,#d6d6d6)"></div>
<div class="t " style="left:956px;top:917px;letter-spacing:-0.050px;color:#f8f8f8">Stats</div>
<div class="a gb" style="left:995px;top:39px;width:252px;height:77px;"></div>
<div class="a" style="left:1001px;top:33px;width:78px;height:12px;background:#f0f0f0"></div>
<div class="t " style="left:1003.6px;top:32px;letter-spacing:-0.200px;">Ship Resources</div>
<svg style="left:1000px;top:44px" width="30" height="24" viewBox="0 0 30 24"><g filter="url(#b50)"><ellipse cx="24" cy="14" rx="6" ry="3.6" fill="#cdcdd8" opacity=".85"/><ellipse cx="6" cy="17.4" rx="4.4" ry="1.2" fill="#d0d0d6" opacity=".8"/><path d="M0.4 11 L1.6 9 L10 4.4 L13.4 5.4 L13.4 9.4 L4.4 13 L1 13.6 Z" fill="#b4a68c"/><path d="M3 8.6 L10 4.8 L12.6 5.6 L5 9.6Z" fill="#eee6d6"/><path d="M0.4 11 L1.6 9.2 L4.6 8 L5.2 12.6 L1 13.6 Z" fill="#2a2622"/><path d="M7 7.2 L8.6 6.4 L9.6 10.4 L8 11.2Z" fill="#5c4c34"/><path d="M11 5 L14 1.6 L21 0.6 L25.6 2 L26.2 6 L23.4 9 L24 12 L18 13.4 L12 11 Z" fill="#4c3a24"/><path d="M15 2 L21 1 L24.4 2.6 L18.4 4.2 Z" fill="#d6c6a6"/><path d="M12.4 6 L15 3.6 L16.6 8 L13.4 10Z" fill="#7c6444"/><circle cx="19.6" cy="5.8" r="1.3" fill="#16100a"/><circle cx="22.8" cy="5.4" r="1.2" fill="#16100a"/><circle cx="17.4" cy="9.4" r="1.2" fill="#c8a868"/><circle cx="21" cy="10" r="1" fill="#b08c50"/><path d="M12.4 10.4 L20 11.4 L21 15 L19 17.4 L13 16.4 Z" fill="#5c4428"/><circle cx="15.6" cy="13.6" r="1.1" fill="#d0b880"/><circle cx="18.4" cy="14.6" r="0.9" fill="#18100a"/><path d="M7 19 L11 15.6 L19 15 L22.8 17.6 L22 20.4 L14 23.6 L8.6 22.4 Z" fill="#a4988a"/><path d="M13 17 L20 16.2 L21.8 18.8 L15 20.6 Z" fill="#4a3828"/><path d="M8 19.4 L11 17 L14 18.8 L11 21.4 Z" fill="#e8e0d0"/><circle cx="11.8" cy="21.8" r="0.9" fill="#18100a"/><path d="M15 21 L21 19.4 L20.6 21 L15 23Z" fill="#3c2e22"/></g></svg>
<svg style="left:1001px;top:70px" width="29" height="18" viewBox="0 0 29 18"><g filter="url(#b50)"><path d="M0.4 10 L5 8 L28 12.6 L27.6 15 L15 17.8 L0.6 12.4 Z" fill="#5c5430"/><path d="M1 11.6 L14.6 16.6 L27 13.8" stroke="#a09868" stroke-width="0.8" fill="none"/><path d="M9 0.8 L25 4 L25.4 5.6 L13.6 5 L2.6 2 Z" fill="#8c8c8c"/><path d="M2.2 1.6 L13.8 4.8 L14 13.8 L2.8 9.6 Z" fill="#e2e2e0"/><path d="M3.6 3.4 L6.2 4.2 L6.4 9.6 L3.8 8.6Z M7.4 4.6 L10 5.4 L10.2 11 L7.6 10Z M11 5.8 L13 6.4 L13.2 12 L11.2 11.2Z" fill="#262626"/><path d="M13.8 4.8 L25.4 5.4 L25.6 10.4 L14 13.8 Z" fill="#5a5a58"/><path d="M14.6 6 L24.6 6.2 L24.6 7.6 L14.6 8Z" fill="#9a9a98"/><path d="M17.6 9.6 L22 7.8 L22.6 10.4 L18.4 12.2Z" fill="#c89858"/><path d="M18 9 L20 8.2 L20.4 9.4Z" fill="#f4e8d0"/></g></svg>
<svg style="left:998px;top:91px" width="32" height="23" viewBox="0 0 32 23"><g filter="url(#b50)"><ellipse cx="17" cy="20" rx="12" ry="2.4" fill="#c8c8d0" opacity=".7"/><circle cx="10.8" cy="6.4" r="3.8" fill="#f4f4f8" stroke="#2a2a32" stroke-width="2.4"/><path d="M14 4.6 L26.4 6.6 L27.4 11.6 L15 10.6 Z" fill="#3c3e60"/><path d="M17 6.4 L19 6.8 L19 9.4 L17 9Z M20.6 7 L22.6 7.4 L22.6 9.8 L20.6 9.6Z" fill="#b4b8e0"/><path d="M25 7 L28 8.4 L27.6 12 L24 11.4Z" fill="#22222a"/><path d="M27.6 9.2 L32 9.8 L32 11 L27.6 10.8Z" fill="#4a4a50"/><path d="M1 10.4 L4 8.8 L26 17 L27.6 20.6 L23.6 22.6 L1.6 13.4 Z" fill="#56565e"/><path d="M5 10.6 L23 17.4 L22 19.4 L4 12.4 Z" fill="#9898a6"/><path d="M10 14.6 L18 17.6 L17.4 18.8 L9.6 15.8Z" fill="#3a3a42"/><path d="M23 17.4 L26.4 18 L27 20.4 L24 21.6Z" fill="#7c7c88"/></g></svg>
<svg style="left:1065px;top:42px" width="28" height="27" viewBox="0 0 28 27"><g filter="url(#b50)"><g transform="scale(1.0)"><path d="M11.6 0.8 L27.2 6.4 L25 15 L20.8 26 L3.4 17.4 L0.4 12.4 Z" fill="#174a4e"/><path d="M11.6 1.2 L26.8 6.8 L18 14.6 L0.8 12.2 Z" fill="#1d8078"/><path d="M10.4 3.6 L19.6 6.8 L15.4 12 L5.6 10.2 Z" fill="#56e2c2"/><path d="M12 5 L17.6 7 L15 10.4 L9 9.4 Z" fill="#7af0d4"/><path d="M0.8 12.8 L18 15 L20.2 24.6 L3.8 16.8 Z" fill="#84c6c2"/><path d="M2.4 13.6 L12 15 L10 19 L4 16.4 Z" fill="#c4eeea"/><path d="M18.2 15 L26.8 7.4 L24.8 14.6 L20.8 25.4 Z" fill="#1e5258"/><path d="M18.4 15.2 L20.6 24.6" stroke="#b4ccd0" stroke-width="1"/><path d="M1 12.4 L18 14.8 L26.6 7" stroke="#0e4a46" stroke-width="0.9" fill="none"/></g></g></svg>
<svg style="left:1068px;top:67px" width="20" height="20" viewBox="0 0 20 20"><g filter="url(#b40)"><g transform="scale(1.45)" fill="none" stroke-width="0.79"><ellipse cx="7" cy="7.4" rx="6.2" ry="2.5" stroke="#8c867a" transform="rotate(30 7 7.4)"/><ellipse cx="7" cy="7.4" rx="6.2" ry="2.5" stroke="#6e685c" transform="rotate(-36 7 7.4)"/><ellipse cx="7" cy="7" rx="2.3" ry="6.4" stroke="#a09a8e" transform="rotate(6 7 7)"/><circle cx="7" cy="7.2" r="1.4" fill="#e4e0d8" stroke="#6a6054"/></g></g></svg>
<svg style="left:1068px;top:90px" width="24" height="24" viewBox="0 0 24 24"><g filter="url(#b50)"><circle cx="9" cy="8" r="7.4" fill="none" stroke="#d4dcec" stroke-width="1.4"/><circle cx="9" cy="8" r="4.6" fill="none" stroke="#a8c0e4" stroke-width="1.6"/><circle cx="9" cy="8" r="2" fill="#c8daf4"/><path d="M7 9 L12 7 L15 9.6 L22 12.4 L16 13.4 L15 17 L16.6 23 L13.4 19 L11 22.6 L10 18 L5 20 L8 15 L3 15.6 L7.6 12.6 Z" fill="#484c54"/><path d="M9 11 L12.6 10 L13.6 14 L10.4 15.4 Z" fill="#98a4b4"/></g></svg>
<div class="t " style="left:1031.6px;top:48px;letter-spacing:-0.050px;">: 0</div>
<div class="t " style="left:1031.6px;top:72px;letter-spacing:-0.050px;">: 2</div>
<div class="t " style="left:1031.6px;top:96px;letter-spacing:-0.050px;">: 300</div>
<div class="a" style="left:1059px;top:47px;width:1px;height:65px;background:#a0a0a0"></div>
<div class="a pb" style="left:1099px;top:43px;width:142px;height:10px;"><div class="pf" style="width:103px"></div></div>
<div class="t " style="left:1099.5px;top:54px;letter-spacing:-0.050px;">363.5 / 493.75</div>
<div class="a pb" style="left:1099px;top:67px;width:142px;height:10px;"><div class="pf" style="width:118px"></div></div>
<div class="t " style="left:1099.5px;top:78px;letter-spacing:-0.050px;">897.5 / 1068.75</div>
<div class="a pb" style="left:1099px;top:91px;width:142px;height:10px;"><div class="pf" style="width:141px"></div></div>
<div class="t " style="left:1099.5px;top:102px;letter-spacing:-0.050px;">25 / 25</div>
<div class="t " style="right:21.95px;top:102px;letter-spacing:-0.050px;transform-origin:100% 10px;">5 / 5</div>
<div class="a gb" style="left:995px;top:127px;width:252px;height:795px;"></div>
<div class="a" style="left:1001px;top:121px;width:158px;height:14px;background:#f0f0f0"></div>
<div class="t " style="left:1003.9px;top:122px;letter-spacing:-0.221px;">Ship Parameters (Rating: 3,621)</div>
<div class="a gb" style="left:1004px;top:141px;width:234px;height:57px;"></div>
<div class="a" style="left:1010px;top:135px;width:150px;height:12px;background:#f0f0f0"></div>
<div class="t " style="left:1012.4px;top:135px;letter-spacing:-0.105px;">Hitpoints (Effective HP: 30,092)</div>
<svg style="left:1004px;top:142px" width="35" height="34" viewBox="0 0 35 34"><g><g transform="translate(4,4)"><g filter="url(#b120)"><path d="M1 3 Q13 -1 25 3 Q23 9 20 14 L8 14 Q3 9 1 3 Z" fill="#a4dcec" opacity=".95"/><ellipse cx="10" cy="5" rx="4" ry="3" fill="#d8ffff"/></g><g filter="url(#b45)"><ellipse cx="14.2" cy="20" rx="11.4" ry="5.4" fill="#2e2e32"/><ellipse cx="14.2" cy="19.2" rx="9" ry="3.6" fill="#8aa4a8"/><ellipse cx="14.2" cy="18.6" rx="5.4" ry="2.4" fill="#dcfcfc"/><path d="M4 21 Q14 26 24 21" stroke="#6c7478" stroke-width="1" fill="none"/><path d="M10 15 L18 15 L17 19 L11 19Z" fill="#c8f4f8" opacity=".85"/></g></g></g></svg>
<svg style="left:1088px;top:149px" width="25" height="23" viewBox="0 0 25 23"><g filter="url(#b55)"><path d="M1 13.4 L12.6 18 L22.4 16.6 L13.4 22.4 Z" fill="#4e4e4e"/><path d="M14 17.6 L22.4 16.6 L15 21.4Z" fill="#8a8a8a"/><path d="M0.2 9 Q2 2 7.2 1 L21.6 7.8 Q24 9 23.8 11.4 Q22 12.8 20 11 Q19 8.6 17 9 Q15 10 14.6 12 L12.6 17.4 Z" fill="#929898"/><path d="M1 8.6 Q3 3 7 2 L11 4 L5 11.6 Z" fill="#767c7c"/><path d="M9 4.6 L17 8.2 L13.4 13 L6.4 9.4 Z" fill="#e2e6e6"/><path d="M4 6 L12 10 M3 8 L10 12" stroke="#6a7070" stroke-width="0.7"/><path d="M12.6 17.6 L14.6 12 Q15 9.6 17 9 Q19.4 8.4 20.6 10.8" stroke="#363636" stroke-width="1.3" fill="none"/><ellipse cx="21.8" cy="10.4" rx="2" ry="2.2" fill="#343434"/></g></svg>
<svg style="left:1168px;top:149px" width="21" height="21" viewBox="0 0 21 21"><g filter="url(#b45)"><path d="M10.5 1 L19.6 5.6 L19.6 15 L10.5 20 L1.4 15 L1.4 5.6 Z" fill="#cfc7b8" stroke="#54463a" stroke-width="1.7"/><path d="M10.5 10.4 L10.5 2 M10.5 10.4 L19 15 M10.5 10.4 L2 15" stroke="#3c3028" stroke-width="1.6"/><path d="M10.5 10.4 L19 5.8 M10.5 10.4 L2 5.8 M10.5 10.4 L10.5 19.4" stroke="#8a7c6c" stroke-width="1"/><path d="M3 7 L9 10 L3 14Z" fill="#8a7e70"/><path d="M12 11.4 L18 14.4 L11.6 18.4Z" fill="#a89c8c"/></g></svg>
<svg style="left:1009px;top:176px" width="16" height="16" viewBox="0 0 16 16"><g><g filter="url(#b70)"><path d="M8 0.6 L15 4 L15 11.6 L8 15.4 L1 11.6 L1 4 Z" fill="#a8c8ee" opacity=".7"/></g><g filter="url(#b45)"><path d="M8 1.6 L14 4.6 L14 11 L8 14.4 L2 11 L2 4.6 Z" fill="#2a7c98"/><path d="M8 2.4 L13 5 L8 7.6 L3 5Z" fill="#3c98b4"/><path d="M6 2.8 L11.4 7 L9.2 7.6 L13.6 10.6 L7.6 12.4 L8.6 9 L2.6 6.4 L7.4 6.6 Z" fill="#e8ffff"/></g></g></svg>
<svg style="left:1066px;top:178px" width="17" height="14" viewBox="0 0 17 14"><g><g filter="url(#b70)"><path d="M0.4 2 Q6 -0.6 16 1 L16.4 12.6 Q8 14 0.6 11 Z" fill="#f4c0c0" opacity=".55"/></g><g filter="url(#b45)" fill="none"><path d="M0.8 3.4 Q3.6 1 7 2.8 Q9.6 4.2 12.6 2.6" stroke="#9a3444" stroke-width="1.5"/><path d="M0.6 7 Q3.6 4.6 7 6.6 Q9.4 8 12 6.8" stroke="#b04050" stroke-width="1.5"/><path d="M0.8 10.6 Q3.6 8.4 7 10.4 Q9.4 11.8 12 10.6" stroke="#9a3444" stroke-width="1.5"/><path d="M9 1.8 Q13.4 -0.4 15.8 2.4 L16 11 Q13 14.4 9 11.6 Q7 7 9 1.8 Z" fill="#e23c22"/><ellipse cx="12.8" cy="6.6" rx="2" ry="2.2" fill="#ff8a5c"/><ellipse cx="13" cy="11" rx="1.8" ry="1" fill="#ff7858"/><ellipse cx="12.6" cy="2.6" rx="1.8" ry="0.9" fill="#ff8a70"/></g></g></svg>
<svg style="left:1126px;top:178px" width="14" height="14" viewBox="0 0 14 14"><g><g filter="url(#b120)"><ellipse cx="7.6" cy="7" rx="6.4" ry="5" fill="#c4c4c4" opacity=".7"/></g><g filter="url(#b45)"><path d="M5.6 1.2 L12.4 4.6 L12 6.4 L6 3 Z" fill="#7c7c7c"/><path d="M0.4 6.2 L8.4 8 L8 9.6 L2 8 Z" fill="#6c6c6c"/><path d="M7.6 12.6 L11.6 8.4 L12.6 9.4 L9 12.8 Z" fill="#5a5a5a"/><path d="M9 6.6 L11.4 4.4 L12.6 9 L10.4 10.4 Z" fill="#fdfdfd"/></g></g></svg>
<svg style="left:1184px;top:177px" width="14" height="15" viewBox="0 0 14 15"><g filter="url(#b50)"><rect x="0.6" y="0.6" width="12.8" height="13.8" rx="1.5" fill="url(#gExp)"/><path d="M0.6 0.6 L4 0.6 L0.6 4Z M13.4 0.6 L13.4 4 L10 0.6Z M0.6 14.4 L0.6 11 L4 14.4Z M13.4 14.4 L10 14.4 L13.4 11Z" fill="#3a1808"/><circle cx="7.4" cy="7.6" r="2.8" fill="#fffef0"/></g></svg>
<div class="t " style="left:1039.6px;top:153px;letter-spacing:-0.050px;">: 11412</div>
<div class="t " style="left:1117.6px;top:153px;letter-spacing:-0.050px;">: 1671</div>
<div class="t " style="left:1195px;top:153px;letter-spacing:-0.050px;">: 787</div>
<div class="t " style="left:1033.8px;top:173px;letter-spacing:-0.050px;">75%</div>
<div class="t " style="left:1033.8px;top:185px;letter-spacing:-0.050px;">90%</div>
<div class="t " style="left:1090.5px;top:173px;letter-spacing:-0.050px;">60%</div>
<div class="t " style="left:1090.5px;top:185px;letter-spacing:-0.050px;">67.5%</div>
<div class="t " style="left:1148.6px;top:173px;letter-spacing:-0.050px;">40%</div>
<div class="t " style="left:1148.6px;top:185px;letter-spacing:-0.050px;">25%</div>
<div class="t " style="left:1205.5px;top:173px;letter-spacing:-0.050px;">50%</div>
<div class="t " style="left:1205.5px;top:185px;letter-spacing:-0.050px;">10%</div>
<div class="a" style="left:1025px;top:174px;width:1px;height:24px;background:linear-gradient(rgba(200,200,200,0),#8c8c8c 30%,#8c8c8c 65%,rgba(200,200,200,0))"></div>
<div class="a" style="left:1026px;top:174px;width:1px;height:24px;background:linear-gradient(rgba(255,255,255,0),#d8d8d8 35%,#c8c8c8 60%,rgba(255,255,255,0))"></div>
<div class="a" style="left:1027px;top:177px;width:1px;height:18px;background:linear-gradient(rgba(255,255,255,0),#fff 50%,rgba(255,255,255,0))"></div>
<svg style="left:1027px;top:180px" width="4" height="16"><path d="M2 0.5 Q3.2 8 2.4 12 Q2 14 0.6 15" stroke="#b4b4b4" stroke-width="0.9" fill="none"/></svg>
<div class="a" style="left:1083px;top:174px;width:1px;height:24px;background:linear-gradient(rgba(200,200,200,0),#7c8898 30%,#7c8898 65%,rgba(200,200,200,0))"></div>
<div class="a" style="left:1084px;top:174px;width:1px;height:24px;background:linear-gradient(rgba(255,255,255,0),#d8d8d8 35%,#c8c8c8 60%,rgba(255,255,255,0))"></div>
<div class="a" style="left:1085px;top:177px;width:1px;height:18px;background:linear-gradient(rgba(255,255,255,0),#fff 50%,rgba(255,255,255,0))"></div>
<svg style="left:1085px;top:180px" width="4" height="16"><path d="M2 0.5 Q3.2 8 2.4 12 Q2 14 0.6 15" stroke="#b4b4b4" stroke-width="0.9" fill="none"/></svg>
<div class="a" style="left:1140px;top:174px;width:1px;height:24px;background:linear-gradient(rgba(200,200,200,0),#8c8c8c 30%,#8c8c8c 65%,rgba(200,200,200,0))"></div>
<div class="a" style="left:1141px;top:174px;width:1px;height:24px;background:linear-gradient(rgba(255,255,255,0),#d8d8d8 35%,#c8c8c8 60%,rgba(255,255,255,0))"></div>
<div class="a" style="left:1142px;top:177px;width:1px;height:18px;background:linear-gradient(rgba(255,255,255,0),#fff 50%,rgba(255,255,255,0))"></div>
<svg style="left:1142px;top:180px" width="4" height="16"><path d="M2 0.5 Q3.2 8 2.4 12 Q2 14 0.6 15" stroke="#b4b4b4" stroke-width="0.9" fill="none"/></svg>
<div class="a" style="left:1198px;top:174px;width:1px;height:24px;background:linear-gradient(rgba(200,200,200,0),#5878c8 30%,#5878c8 65%,rgba(200,200,200,0))"></div>
<div class="a" style="left:1199px;top:174px;width:1px;height:24px;background:linear-gradient(rgba(255,255,255,0),#d8d8d8 35%,#c8c8c8 60%,rgba(255,255,255,0))"></div>
<div class="a" style="left:1200px;top:177px;width:1px;height:18px;background:linear-gradient(rgba(255,255,255,0),#fff 50%,rgba(255,255,255,0))"></div>
<svg style="left:1200px;top:180px" width="4" height="16"><path d="M2 0.5 Q3.2 8 2.4 12 Q2 14 0.6 15" stroke="#b4b4b4" stroke-width="0.9" fill="none"/></svg>
<div class="a gb" style="left:1004px;top:209px;width:74px;height:32px;"></div>
<div class="a" style="left:1010px;top:204px;width:42px;height:12px;background:#f0f0f0"></div>
<div class="t " style="left:1012.4px;top:204px;letter-spacing:-0.050px;">Defence</div>
<svg style="left:1009px;top:214px" width="26" height="29" viewBox="0 0 26 29"><g><g transform="translate(3,3)"><g filter="url(#b120)"><path d="M0.6 1 L19.4 1 L19.4 11 Q18.4 19.4 10 22.4 Q1.6 19.4 0.6 11 Z" fill="#86e8d8" opacity=".85"/></g><g filter="url(#b45)"><path d="M2.8 1.6 L17.2 1.6 L17.2 11 Q16.4 17.6 10 20.6 Q3.6 17.6 2.8 11 Z" fill="#1e6454"/><path d="M4.2 3 L15.8 3 L15.8 11 Q15 16.4 10 19 Q5 16.4 4.2 11 Z" fill="url(#gDef)"/></g></g></g></svg>
<div class="t " style="left:1039px;top:215px;letter-spacing:-0.050px;">: 70</div>
<div class="t " style="left:1039px;top:227px;letter-spacing:-0.050px;">: 70</div>
<div class="a gb" style="left:1086px;top:209px;width:152px;height:32px;"></div>
<div class="a" style="left:1093px;top:204px;width:124px;height:12px;background:#f0f0f0"></div>
<div class="t " style="left:1095.8px;top:204px;letter-spacing:-0.236px;">Capacitor (Lasts: 1m 35s)</div>
<svg style="left:1095px;top:217px" width="19" height="21" viewBox="0 0 19 21"><g filter="url(#b50)"><path d="M12.6 6 L17.8 7.4 L14.8 11.6 L17 12 L10.2 20.4 L11.4 14.2 L9.2 13.6 Z" fill="#e8e4de" stroke="#4c4038" stroke-width="0.8"/><path d="M6.6 0.4 L15 3 L13.4 6.4 L9 17 L1.4 15.6 L0 12 Z" fill="#2c2018"/><path d="M7 1.6 L10.2 2.4 L3.2 13.8 L1 12.4 Z" fill="#f6e8cc"/><path d="M10.2 2.4 L14 3.8 L11.4 7 L8 16 L3.2 13.8 Z" fill="#6e4a20"/><path d="M9 5 L11 5.6 L6 14.4 L4.6 13.8Z" fill="#9a7440"/><path d="M7 1 L14.6 3.2 L14 4.6 L7 2.4Z" fill="#d8d0c4"/></g></svg>
<svg style="left:1173px;top:217px" width="24" height="21" viewBox="0 0 24 21"><g filter="url(#b60)"><path d="M1.6 6 Q3 0.6 9 1.4 L19 7 Q23.6 10.6 22 15 Q20 19.6 15 19 L4 15 Q0.4 11.6 1.6 6 Z" fill="#56523a"/><path d="M2.8 5.4 Q5 2 9 2.6 L15.6 6.4 Q10 7.4 8 12.4 L4 10.8 Q2.2 8.4 2.8 5.4 Z" fill="#d6d2ae"/><path d="M5 4.6 Q7 3.4 9.6 4.2 L12 5.6 Q8 6 6.4 9Z" fill="#f2eed4"/><path d="M8 12.4 L15.6 6.4 L19 8.6 L13 15.4 Z" fill="#8a8666"/><ellipse cx="17.6" cy="12.8" rx="3.4" ry="4.6" fill="#9c9a8c" transform="rotate(-28 17.6 12.8)"/><ellipse cx="16.6" cy="11.6" rx="1.4" ry="2" fill="#d8d6cc" transform="rotate(-28 16.6 11.6)"/><path d="M1.6 11.4 L5 14.4 L14 18.4 L19.6 17.6 L15 20 L4 16 Z" fill="#24221a"/><path d="M8 12.6 L12.6 15.6" stroke="#3a3826" stroke-width="1.2"/></g></svg>
<div class="t " style="left:1120.4px;top:220px;letter-spacing:-0.050px;">: 1076</div>
<div class="t " style="left:1201.6px;top:215px;letter-spacing:-0.050px;">- 19.3</div>
<div class="t " style="left:1201.6px;top:227px;letter-spacing:-0.050px;">+10.7</div>
<div class="a gb" style="left:1004px;top:252px;width:74px;height:55px;"></div>
<div class="a" style="left:1010px;top:247px;width:50px;height:12px;background:#f0f0f0"></div>
<div class="t " style="left:1012.4px;top:247px;letter-spacing:-0.167px;">Firepower</div>
<svg style="left:1007px;top:259px" width="29" height="21" viewBox="0 0 29 21"><g><g filter="url(#b70)"><path d="M19 8 L27.6 7 L26 12 L20 13Z" fill="#c8c8c8" opacity=".8"/></g><g filter="url(#b45)"><path d="M0 6 L2 4.4 L13 2.4 L14.4 6.6 L4 11.2 L0.6 9.2 Z" fill="#484848"/><path d="M1.6 5.4 L12.6 3 L13.2 5 L3 8.2Z" fill="#dedede"/><path d="M11.4 3 L14 0.6 L20 0 L23.4 2 L23 6 L20.6 9.6 L14 9 Z" fill="#2e2e2e"/><path d="M15 1.4 L20 0.8 L22 2.4 L17.4 4Z" fill="#f0f0f0"/><path d="M17 5 L20 4.6 L19.4 7.6 L17.4 7.6Z" fill="#b4b4b4"/><path d="M13.6 8.6 L20 9.2 L20 14.4 L15 14.4 Z" fill="#3a3a3a"/><path d="M15 11 L17 10.6 L17.4 13.4 L15.6 13.6Z" fill="#eaeaea"/><path d="M9 16 L13.6 13.6 L21 14 L22.4 16 L14.6 20.4 L10 19.4 Z" fill="#c6c6c6"/><path d="M9 16 L12 15 L13.6 18.4 L14.4 20.4 L10 19.4Z" fill="#48505a"/><path d="M16 15 L21 14.6 L21.6 15.8 L17 17Z" fill="#6a6a6a"/></g></g></svg>
<svg style="left:1010px;top:285px" width="25" height="18" viewBox="0 0 25 18"><g><defs><linearGradient id="gMs" x1="0" x2="1" y1="0" y2="0"><stop offset="0" stop-color="#909090" stop-opacity="0"/><stop offset="0.6" stop-color="#505050" stop-opacity=".75"/><stop offset="1" stop-color="#101010"/></linearGradient></defs><g filter="url(#b45)"><path d="M2 3 L13 1.2 L18.8 2.2 L19 3.6 L14 4.4 L2 3.6Z" fill="url(#gMs)"/><path d="M11 1 L17 1 L17.6 2 L11 2.2Z" fill="#f4f4f4"/><path d="M13 2.6 L18.8 2.4 L19 3.8 L14 4.4Z" fill="#0c0c0c"/><path d="M7 9 L18 7.2 L24 8 L24.4 10 L19 10.8 L7 9.6Z" fill="url(#gMs)"/><path d="M16 7 L22 7 L22.6 8 L16 8.2Z" fill="#e8e8e8"/><path d="M18 8.4 L24 8.2 L24.4 10.2 L19 10.8Z" fill="#0c0c0c"/><path d="M0 15 L9 13.4 L14.6 14.4 L14.8 16.2 L10 16.8 L0 15.6Z" fill="url(#gMs)"/><path d="M8 13.2 L13 13.2 L13.6 14.2 L8 14.4Z" fill="#eeeeee"/><path d="M9 14.8 L14.6 14.6 L14.8 16.4 L10 16.8Z" fill="#0c0c0c"/></g></g></svg>
<div class="t " style="left:1035px;top:263px;letter-spacing:-0.050px;">: 436</div>
<div class="t " style="left:1035px;top:287px;letter-spacing:-0.050px;">: 904</div>
<div class="a gb" style="left:1086px;top:252px;width:152px;height:55px;"></div>
<div class="a" style="left:1093px;top:247px;width:48px;height:12px;background:#f0f0f0"></div>
<div class="t " style="left:1096px;top:247px;letter-spacing:-0.050px;">Targeting</div>
<svg style="left:1092px;top:258px" width="22" height="23" viewBox="0 0 22 23"><g filter="url(#b50)"><circle cx="11" cy="11.4" r="10.6" fill="url(#gRng)"/><path d="M2.6 17.6 A10.6 10.6 0 0 0 19.4 17.6" stroke="#8e989e" stroke-width="1.1" fill="none"/><path d="M11 11.4 L1.4 13 A9.8 9.8 0 0 1 13 1.8 Z" fill="#c2e2ea" opacity=".9"/><path d="M10.6 13.2 L19.2 3.2" stroke="#2c3438" stroke-width="1.7"/></g></svg>
<svg style="left:1181px;top:259px" width="23" height="23" viewBox="0 0 23 23"><g filter="url(#b50)"><path d="M11.5 0.2 L12.8 3 L10.2 3Z M11.5 22.8 L12.8 20 L10.2 20Z M0.2 11.5 L3 10.2 L3 12.8Z M22.8 11.5 L20 10.2 L20 12.8Z" fill="#8a8274"/><circle cx="11.5" cy="11.5" r="9" fill="url(#gCmp)"/><circle cx="11.5" cy="11.5" r="9" fill="none" stroke="#8c8476" stroke-width="1"/><path d="M5 18 A9 9 0 0 0 20.4 13" stroke="#5e564a" stroke-width="1.2" fill="none"/><circle cx="11.5" cy="11.5" r="5.4" fill="none" stroke="#8e8678" stroke-width="0.8"/><path d="M11.5 4 L11.5 19 M4 11.5 L19 11.5" stroke="#80786a" stroke-width="0.8"/><circle cx="9" cy="9" r="1.5" fill="#ece6dc"/><circle cx="14" cy="14" r="1.4" fill="#e4ded2"/><circle cx="14" cy="9" r="1.4" fill="#e8e2d6"/><circle cx="9" cy="14" r="1.3" fill="#dcd6ca"/></g></svg>
<svg style="left:1093px;top:285px" width="21" height="19" viewBox="0 0 21 19"><g filter="url(#b55)"><path d="M8 9 L12.6 3.6 L18.4 6.6 L19.2 13 L15.4 17.4 L10 13.4 Z" fill="#e6dac2"/><path d="M11 13 L18.8 11 L19 13.4 L15.4 17.4 L12 15Z" fill="#b89c74"/><path d="M12.6 3.6 L10 9 L15 8 Z" fill="#c89a8a" opacity=".8"/><path d="M7 9.4 L5.6 1 L8.8 0.4 L10.4 8.4 Z" fill="#d2bc98"/><path d="M7.4 5 L8.6 0.6" stroke="#fff" stroke-width="0.8"/><path d="M6 10 L0.4 8.4 L0.8 11.4 L5.6 12 Z" fill="#7e6040"/><path d="M6 11.4 L1.8 17.4 L4.8 18.4 L8.6 12.8 Z" fill="#8a6c48"/><path d="M8.4 12.6 L7.4 18.6 L10 18.4 L10.6 13 Z" fill="#a48864"/><circle cx="7.6" cy="10.4" r="2.2" fill="#3a2816"/></g></svg>
<svg style="left:1182px;top:283.5px" width="21" height="21" viewBox="0 0 21 21"><g filter="url(#b45)"><circle cx="10.5" cy="10.5" r="9.6" fill="#fbfcfd" stroke="#8e9296" stroke-width="1"/><circle cx="10.5" cy="10.5" r="8" fill="none" stroke="#dfe6ea" stroke-width="1.4"/><circle cx="10.5" cy="10.5" r="5.8" fill="none" stroke="#2e343c" stroke-width="1.3"/><circle cx="10.5" cy="10.5" r="3" fill="#dfe8ee" stroke="#262c34" stroke-width="1.5"/><circle cx="9.8" cy="9.8" r="1" fill="#39414a"/></g></svg>
<div class="t " style="left:1120.8px;top:263px;letter-spacing:-0.050px;">: 62.5 km</div>
<div class="t " style="left:1120.8px;top:287px;letter-spacing:-0.236px;">: 412.5 mm</div>
<div class="t " style="left:1210px;top:263px;letter-spacing:-0.050px;">: 5</div>
<div class="t " style="left:1210px;top:287px;letter-spacing:-0.050px;">: 14</div>
<div class="a gb" style="left:1004px;top:319px;width:234px;height:31px;"></div>
<div class="a" style="left:1010px;top:314px;width:40px;height:12px;background:#f0f0f0"></div>
<div class="t " style="left:1012.4px;top:313px;letter-spacing:-0.123px;">Mobility</div>
<svg style="left:1009px;top:328px" width="21" height="17" viewBox="0 0 21 17"><g><g filter="url(#b120)"><ellipse cx="15" cy="10" rx="6" ry="5" fill="#9ceef2" opacity=".6"/></g><g filter="url(#b45)"><path d="M0.6 5.4 L4.6 0.8 L13 0.4 L17 3 L20.4 8.6 L19 13 L13 15.6 L8 15 Z" fill="#c8b49c"/><path d="M4.6 0.8 L13 0.4 L17 3 L10 9 L3 5.6 Z" fill="#f8f2e8"/><path d="M5.6 1.2 L12.4 1 " stroke="#8a7866" stroke-width="0.9"/><path d="M0.6 5.4 L2.8 4.4 L10 13.6 L8 15 Z" fill="#4a3020"/><path d="M10 8.6 L17 3.4 L20.4 8.6 L19 13 L13 15.4 L9.8 13 Z" fill="#3ccfd8"/><path d="M12 9 L16 6 L18.4 9 L15 11.6 Z" fill="#a8f4f6"/><path d="M8.4 14.4 L13 15.8 L18.4 13.6 L13.4 13 Z" fill="#1c5a64"/></g></g></svg>
<svg style="left:1092px;top:322px" width="26" height="26" viewBox="0 0 26 26"><g><g filter="url(#b120)"><circle cx="13" cy="12.4" r="8.4" fill="#9cc8f0" opacity=".55"/></g><g filter="url(#b45)"><path d="M12.2 0.8 L14 0.8 L14 4.4 L12.2 4.4Z" fill="#4a6488"/><path d="M10.4 3.4 L15.8 3.4 L15.8 5.2 L10.4 5.2Z" fill="#5a7ca8"/><path d="M5 5 L7 7 M21 5 L19 7" stroke="#5a7ca8" stroke-width="1.2"/><circle cx="13" cy="12.4" r="7.2" fill="url(#gStop)" stroke="#3c6898" stroke-width="1.3"/><circle cx="13" cy="12.4" r="4" fill="#c4e2fa" opacity=".8"/><path d="M13 12.6 L13 8.4" stroke="#1c3c68" stroke-width="1.4"/><path d="M6 18.4 L20 18.4 L25.6 25.4 L0.4 25.4 Z" fill="#4c7cb0"/><path d="M7.6 19 L4.4 25 M10.4 19 L8.6 25 M13 19 L12.8 25 M15.6 19 L17 25 M18.2 19 L21.2 25" stroke="#eef4fa" stroke-width="1.3"/></g></g></svg>
<svg style="left:1160px;top:325px" width="21" height="22" viewBox="0 0 21 22"><g><g filter="url(#b70)"><path d="M0.8 8 Q2 1 9 0.8 L13 4 L6 14 Z" fill="#6cdee4" opacity=".9"/><path d="M3 6 Q5 2.6 9 2.4 L10.6 4.4 L5.6 10Z" fill="#dcfcfe"/></g><g filter="url(#b45)"><path d="M6.4 8 L12 4.4 L18 6.4 L20.4 12 L19 18 L13 21.4 L8 19 L5.6 13Z" fill="#b4a48c"/><path d="M8 9 L12 6 L16 7.4 L13 10Z" fill="#e8dece"/><path d="M15.6 10 Q11 8.6 10.4 12.6 Q10.6 16 14 15.6 Q16.4 15 15.6 12.4 Q14 11.4 13.2 12.8" stroke="#54402c" stroke-width="1.3" fill="none"/><path d="M7.6 17.4 L13 20.6 L18.4 17.6 L19.6 13" stroke="#3c2c1c" stroke-width="1.5" fill="none"/><path d="M9 19 L13 21.2 L16 19.6" stroke="#d8c8a8" stroke-width="0.8" fill="none"/></g></g></svg>
<div class="t " style="left:1036px;top:329px;letter-spacing:-0.050px;">: 2939 m/s</div>
<div class="t " style="left:1120.8px;top:329px;letter-spacing:-0.050px;">: 5.9 s</div>
<div class="t " style="left:1183.5px;top:329px;letter-spacing:-0.050px;">: 3.8 au/s</div>
<div class="t " style="left:1003.9px;top:362px;letter-spacing:-0.175px;">Signature: 1062 m</div>
<div class="t " style="left:1110.8px;top:362px;letter-spacing:-0.126px;">Price: 0 isk</div>
<div class="t " style="left:1003.9px;top:378px;letter-spacing:-0.225px;">Cargohold: 360 m3</div>
<div class="t " style="left:1003.9px;top:394px;letter-spacing:-0.222px;">Fleet Commander - right click to set</div>
<div class="t " style="left:1003.9px;top:410px;letter-spacing:-0.188px;">Wing Commander - right click to set</div>
<div class="t " style="left:1003.9px;top:426px;letter-spacing:-0.207px;">Squad Commander - right click to set</div>
<div class="a" style="left:6px;top:927px;width:1257px;height:11px;background:#f0f0f0"></div>
<div class="a" style="left:39px;top:928px;width:1188px;height:10px;background:linear-gradient(#f7f7f7 0,#f1f1f1 45%,#d2d2d2 58%,#c6c6c6 100%);border:1px solid #808080;border-bottom:none;border-radius:2px 2px 0 0"></div>
<div class="a" style="left:630px;top:932px;width:1px;height:6px;background:#333"></div>
<div class="a" style="left:633px;top:932px;width:1px;height:6px;background:#333"></div>
<div class="a" style="left:636px;top:932px;width:1px;height:6px;background:#333"></div>
<svg style="left:11px;top:931px" width="6" height="7"><path d="M5 0.5 L1 4.5 L3 6.5 L5 6.5 Z" fill="#222"/></svg>
<svg style="left:1244px;top:931px" width="6" height="7"><path d="M1 0.5 L5 4.5 L3 6.5 L1 6.5 Z" fill="#222"/></svg>
</body></html>
